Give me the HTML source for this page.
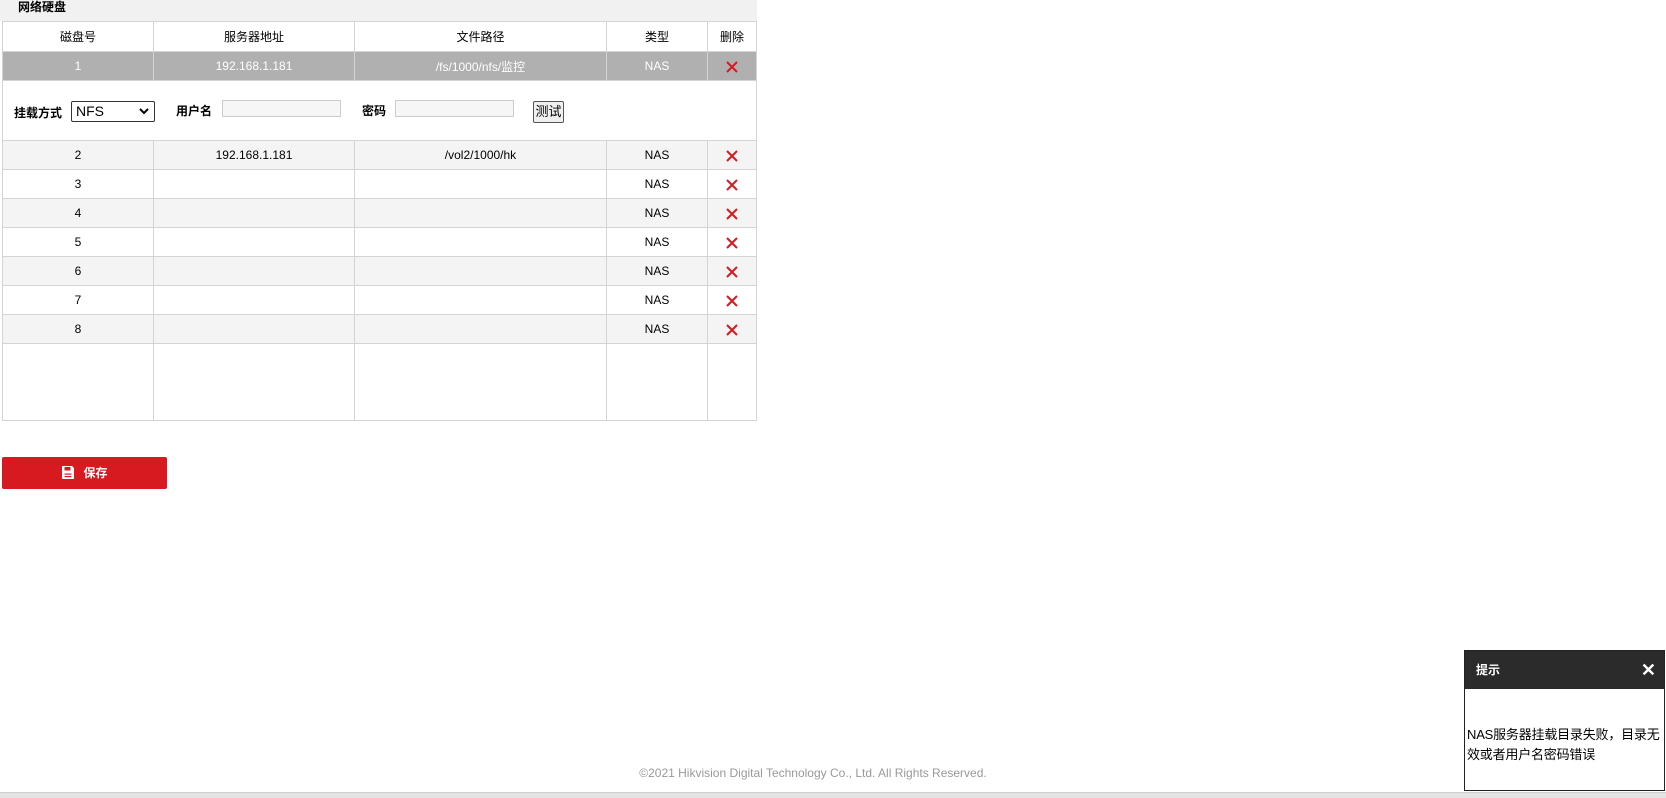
<!DOCTYPE html>
<html><head><meta charset="utf-8"><style>
body{margin:0;width:1666px;height:797px;position:relative;overflow:hidden;background:#fff;font-family:"Liberation Sans","Noto Sans CJK SC",sans-serif;font-size:12px;color:#000}
.title{position:absolute;left:0;top:0;width:757px;height:21px;background:#f1f1f1;font-weight:bold;font-size:12px;line-height:14px;padding-left:18px;box-sizing:border-box}
table{position:absolute;left:2px;top:21px;border-collapse:collapse;table-layout:fixed}
td{border:1px solid #d4d4d4;text-align:center;height:28px;padding:0;font-size:12px}
tr.sel td{background:#b0b0b0;color:#fff}
tr.g td{background:#f4f4f4}
.x{display:inline-block;width:12px;height:12px;vertical-align:middle}
.abs{position:absolute}
.lbl{font-weight:bold;font-size:12px}
.inp{border:1px solid #ccc;background:#f6f6f6;height:17px;box-sizing:border-box}
.save{position:absolute;left:2px;top:457px;width:165px;height:32px;background:#d71920;border-radius:2px;color:#fff;font-weight:bold;font-size:12px;line-height:32px;text-align:center}
.foot{position:absolute;top:766px;left:0;width:1626px;text-align:center;color:#999;font-size:12px}
.bar{position:absolute;left:0;top:792px;width:1666px;height:5px;background:#e4e4e4;border-top:1px solid #cfcfcf}
.pop{position:absolute;left:1464px;top:650px;width:201px;height:141px;border:1px solid #222;background:#fff;box-sizing:border-box}
.ph{height:38px;background:#2b2b2b;color:#fff;font-weight:bold;font-size:12px;line-height:38px;padding-left:11px;position:relative}
</style></head><body>
<svg width="0" height="0" style="position:absolute"><defs><symbol id="xx" viewBox="0 0 12 12"><path d="M1 1L11 11M11 1L1 11" stroke="#d71920" stroke-width="2"/></symbol></defs></svg>
<div class="title">网络硬盘</div>
<table>
<colgroup><col style="width:151px"><col style="width:201px"><col style="width:252px"><col style="width:101px"><col style="width:49px"></colgroup>
<tr><td style="height:29px">磁盘号</td><td>服务器地址</td><td>文件路径</td><td>类型</td><td>删除</td></tr>
<tr class="sel"><td>1</td><td>192.168.1.181</td><td>/fs/1000/nfs/监控</td><td>NAS</td><td><svg class="x"><use href="#xx"/></svg></td></tr>
<tr><td colspan="5" style="height:59px"></td></tr>
<tr class="g"><td>2</td><td>192.168.1.181</td><td>/vol2/1000/hk</td><td>NAS</td><td><svg class="x"><use href="#xx"/></svg></td></tr>
<tr><td>3</td><td></td><td></td><td>NAS</td><td><svg class="x"><use href="#xx"/></svg></td></tr>
<tr class="g"><td>4</td><td></td><td></td><td>NAS</td><td><svg class="x"><use href="#xx"/></svg></td></tr>
<tr><td>5</td><td></td><td></td><td>NAS</td><td><svg class="x"><use href="#xx"/></svg></td></tr>
<tr class="g"><td>6</td><td></td><td></td><td>NAS</td><td><svg class="x"><use href="#xx"/></svg></td></tr>
<tr><td>7</td><td></td><td></td><td>NAS</td><td><svg class="x"><use href="#xx"/></svg></td></tr>
<tr class="g"><td>8</td><td></td><td></td><td>NAS</td><td><svg class="x"><use href="#xx"/></svg></td></tr>
<tr><td style="height:76px"></td><td></td><td></td><td></td><td></td></tr>
</table>
<div class="abs lbl" style="left:14px;top:104px">挂载方式</div>
<div class="abs" style="left:71px;top:101px;width:84px;height:21px;border:1px solid #333;border-radius:2px;box-sizing:border-box;font-size:14px;line-height:19px;padding-left:4px">NFS<svg style="position:absolute;right:5px;top:6px" width="10" height="7" viewBox="0 0 10 7"><path d="M1 1L5 5L9 1" stroke="#000" stroke-width="2" fill="none"/></svg></div>
<div class="abs lbl" style="left:176px;top:102px">用户名</div>
<div class="abs inp" style="left:222px;top:100px;width:119px"></div>
<div class="abs lbl" style="left:362px;top:102px">密码</div>
<div class="abs inp" style="left:395px;top:100px;width:119px"></div>
<div class="abs" style="left:533px;top:101px;width:31px;height:22px;border:1px solid #555;border-radius:2px;background:#f0f0f0;box-sizing:border-box;font-size:13px;line-height:20px;text-align:center">测试</div>
<div class="save"><svg width="14" height="15" viewBox="0 0 14 15" style="vertical-align:-3px;margin-right:8px"><path d="M1 1h10l2 2v11H1z" fill="#fff"/><rect x="3.5" y="2" width="6" height="3.5" fill="#d71920"/><rect x="3.5" y="8.5" width="7" height="1.2" fill="#d71920"/><rect x="3.5" y="11" width="7" height="1.2" fill="#d71920"/></svg>保存</div>
<div class="foot">©2021 Hikvision Digital Technology Co., Ltd. All Rights Reserved.</div>
<div class="bar"></div>
<div class="pop"><div class="ph">提示<span style="position:absolute;right:8px;top:0;font-size:18px">✕</span></div>
<div style="padding:36px 0 0 2px;font-size:13px;line-height:20px;white-space:nowrap;letter-spacing:-0.2px">NAS服务器挂载目录失败，目录无<br>效或者用户名密码错误</div></div>
</body></html>
